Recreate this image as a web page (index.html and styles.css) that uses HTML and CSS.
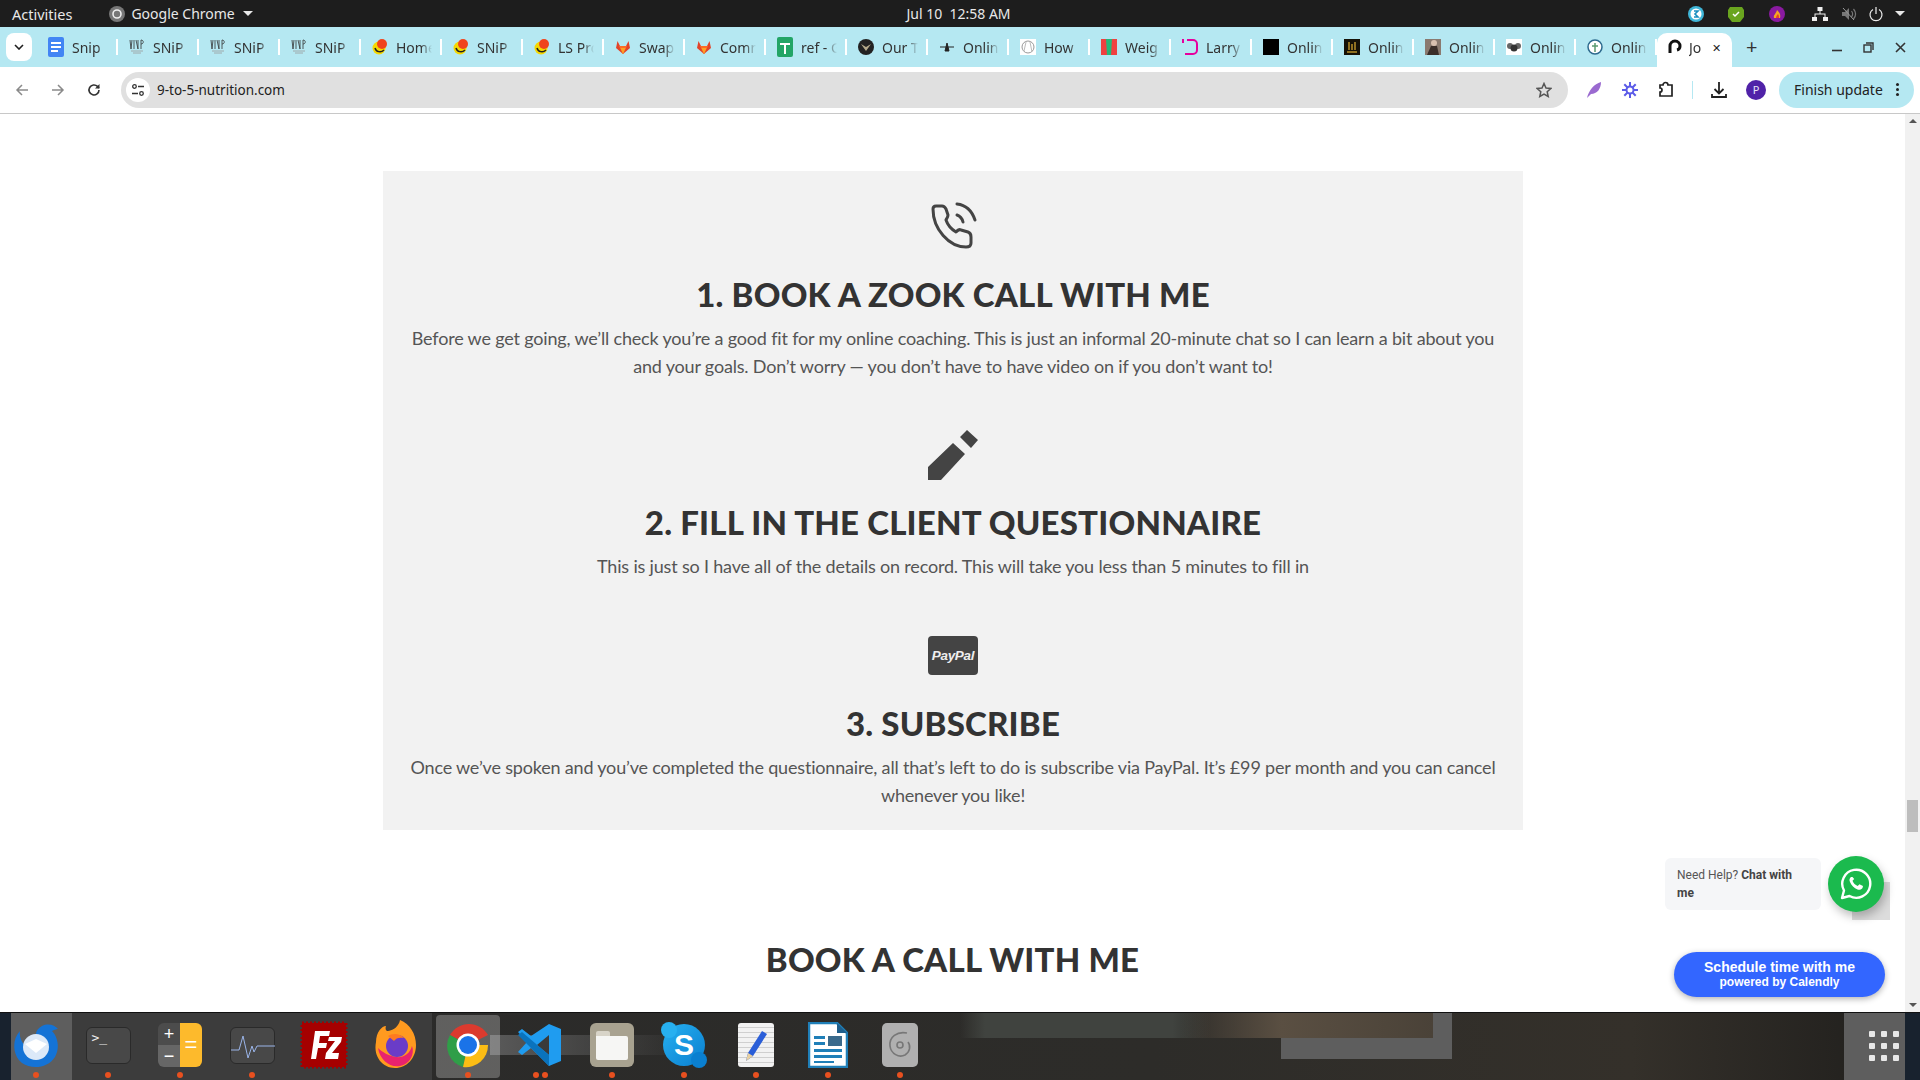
FILE: index.html
```html
<!DOCTYPE html>
<html>
	<head>
		<meta charset="UTF-8">
		<title>9 to 5 Nutrition</title>
		<link rel="stylesheet" href="styles.css">
	</head>
	<body>
		<div class="topbar">
			<div class="top-left">
				<span>Activities</span>
				<span class="app-name">
					<svg width="16" height="16" viewBox="0 0 16 16"><circle cx="8" cy="8" r="8" fill="#777"/><circle cx="8" cy="8" r="4" fill="none" stroke="#eee" stroke-width="1.6"/></svg>
					Google Chrome
					<i class="caret"></i>
				</span>
			</div>
			<div class="clock">Jul 10&nbsp; 12:58 AM</div>
			<div class="tray">
				<svg width="16" height="18" viewBox="0 0 16 18"><circle cx="8" cy="9" r="8" fill="#3fb6d8"/><circle cx="8" cy="9" r="5.5" fill="#fff"/><path d="M6 6h4L7 9l3 3H6" fill="none" stroke="#1a8fc0" stroke-width="1.6"/></svg>
				<svg width="16" height="18" viewBox="0 0 16 18"><path d="M2 2h12l2 3v7l-4 5H4l-4-5V5z" fill="#6aa51f"/><path d="M5 9l2 2 4-4" fill="none" stroke="#fff" stroke-width="1.5"/></svg>
				<svg class="tray-fire" width="16" height="18" viewBox="0 0 16 18"><circle cx="8" cy="9" r="8" fill="#8a1aa0"/><path d="M5 13c-1-3 2-4 3-8 2 2 4 4 3 8z" fill="#f5a623"/><path d="M7 13c0-2 1-3 2-4 1 1 1 3 1 4z" fill="#e8402a"/></svg>
				<svg class="tray-net" width="16" height="16" viewBox="0 0 16 16" fill="#eee"><rect x="5.5" y="1" width="5" height="4"/><rect x="0" y="11" width="5" height="4"/><rect x="11" y="11" width="5" height="4"/><path d="M7.5 5h1v2.500h5V11h-1V8.500h-9V11h-1V7.500h5z"/></svg>
				<svg class="tray-vol" width="16" height="16" viewBox="0 0 16 16"><path d="M1 6h3l4-4v12l-4-4H1z" fill="#777"/><path d="M10.500 5c1.500 2 1.500 4 0 6M12.500 3c2.500 3 2.500 7 0 10" fill="none" stroke="#777" stroke-width="1.200"/><path d="M2 2l11 12" stroke="#999" stroke-width="1"/></svg>
				<svg class="tray-power" width="16" height="16" viewBox="0 0 16 16" fill="none" stroke="#eee" stroke-width="1.200"><path d="M5 3.500a6 6 0 1 0 6 0M8 1v7"/></svg>
				<i class="caret caret-tray"></i>
			</div>
		</div>

		<svg class="defs" width="0" height="0">
			<symbol id="duck" viewBox="0 0 16 16"><circle cx="7" cy="9" r="6.500" fill="#f5d800"/><path d="M3 9c1 4 6 5 9 2" fill="none" stroke="#222" stroke-width="1.500"/><circle cx="10" cy="5" r="5" fill="#f0441c"/></symbol>
			<symbol id="fox" viewBox="0 0 16 16"><path d="M8 15L1 9l1.500-7L5 7h6l2.500-5L15 9z" fill="#e24329"/><path d="M8 15L4 7h8z" fill="#fc6d26"/><path d="M8 15L5.500 9h5z" fill="#fca326"/></symbol>
			<symbol id="snip" viewBox="0 0 16 16"><path d="M1 1l1 9M3 1L2 10M5 1v9M7 1l2 9M9 1v9M12 1v9M12 1c3 0 3 4 0 4" fill="none" stroke="#333" stroke-width=".8"/><path d="M2 12h12M4 14h8" stroke="#999" stroke-width=".8"/></symbol>
		</svg>

		<div class="tabstrip">
			<div class="tab-search"><svg width="10" height="6" viewBox="0 0 10 6"><path d="M1 1l4 4 4-4" fill="none" stroke="#1f1f1f" stroke-width="1.600"/></svg></div>
			<div class="tabs">
				<div class="tab"><svg width="16" height="20" viewBox="0 0 16 20"><rect width="16" height="20" rx="2" fill="#4285f4"/><path d="M3 6h10M3 10h10M3 14h7" stroke="#fff" stroke-width="1.800"/></svg><span>Snip</span></div>
				<div class="tab"><svg width="16" height="16"><use href="#snip"/></svg><span>SNiP</span></div>
				<div class="tab"><svg width="16" height="16"><use href="#snip"/></svg><span>SNiP</span></div>
				<div class="tab"><svg width="16" height="16"><use href="#snip"/></svg><span>SNiP</span></div>
				<div class="tab"><svg width="16" height="16"><use href="#duck"/></svg><span>Home</span></div>
				<div class="tab"><svg width="16" height="16"><use href="#duck"/></svg><span>SNiP</span></div>
				<div class="tab"><svg width="16" height="16"><use href="#duck"/></svg><span>LS Pro</span></div>
				<div class="tab"><svg width="16" height="16"><use href="#fox"/></svg><span>Swap</span></div>
				<div class="tab"><svg width="16" height="16"><use href="#fox"/></svg><span>Comm</span></div>
				<div class="tab"><svg width="16" height="20" viewBox="0 0 16 20"><rect width="16" height="20" rx="2" fill="#23a566"/><path d="M3 7h10M8 7v10" stroke="#fff" stroke-width="2"/></svg><span>ref - G</span></div>
				<div class="tab"><svg width="16" height="16" viewBox="0 0 16 16"><circle cx="8" cy="8" r="8" fill="#222"/><path d="M3 5l5 7 5-7-5 3z" fill="#b5a98a"/></svg><span>Our T</span></div>
				<div class="tab"><svg width="16" height="16" viewBox="0 0 16 16"><path d="M1 8h14M8 4l2 8H6z" stroke="#222" fill="#222"/></svg><span>Online</span></div>
				<div class="tab"><svg width="16" height="16" viewBox="0 0 16 16"><rect width="16" height="16" fill="#fff"/><circle cx="8" cy="8" r="6" fill="none" stroke="#999"/><path d="M6 3l-2 9M10 3l2 10" stroke="#bbb"/></svg><span>How</span></div>
				<div class="tab"><svg width="16" height="16" viewBox="0 0 16 16"><rect width="16" height="16" fill="#f04040"/><path d="M5 0h6l-1 16H6z" fill="#25b87a"/></svg><span>Weig</span></div>
				<div class="tab"><svg width="16" height="16" viewBox="0 0 16 16"><path d="M5 1h6a4 4 0 0 1 4 4v6a4 4 0 0 1-4 4H3" fill="none" stroke="#e6009e" stroke-width="2"/><path d="M1 0v4" stroke="#e6009e" stroke-width="2"/></svg><span>Larry</span></div>
				<div class="tab"><svg width="16" height="16"><rect width="16" height="16" fill="#000"/></svg><span>Online</span></div>
				<div class="tab"><svg width="16" height="16" viewBox="0 0 16 16"><rect width="16" height="16" fill="#161208"/><path d="M3 13h10M5 3v8M8 5v6M11 3v8" stroke="#b8902a" stroke-width="1.500"/></svg><span>Online</span></div>
				<div class="tab"><svg width="16" height="16" viewBox="0 0 16 16"><rect width="16" height="16" fill="#8a7a70"/><circle cx="9" cy="4" r="3" fill="#d8c0b0"/><path d="M2 16l4-9h6l2 9z" fill="#3a2e2a"/></svg><span>Online</span></div>
				<div class="tab"><svg width="16" height="16" viewBox="0 0 16 16"><rect width="16" height="16" fill="#fff"/><circle cx="4" cy="7" r="3" fill="#666"/><circle cx="12" cy="7" r="3" fill="#666"/><circle cx="8" cy="9" r="3.500" fill="#333"/></svg><span>Online</span></div>
				<div class="tab"><svg width="16" height="16" viewBox="0 0 16 16"><circle cx="8" cy="8" r="7" fill="#fff" stroke="#2d6a8e" stroke-width="1.500"/><path d="M8 4v9M5 7h6" stroke="#5a9a70" stroke-width="1.500"/></svg><span>Online</span></div>
				<div class="tab tab-active"><svg width="16" height="16" viewBox="0 0 16 16"><path d="M3 14V7a5 5 0 0 1 10 0c0 2-1 3.500-3 4" fill="none" stroke="#111" stroke-width="3"/></svg><span>Jo</span><b class="tab-x">✕</b></div>
			</div>
			<div class="tab-new">+</div>
			<div class="win-btns">
				<svg width="10" height="10" viewBox="0 0 10 10"><path d="M0 8.500h10" stroke="#333" stroke-width="1.600"/></svg>
				<svg width="11" height="11" viewBox="0 0 11 11" fill="none" stroke="#333" stroke-width="1.400"><rect x="1" y="3" width="7" height="7"/><path d="M3 1h7v7"/></svg>
				<svg width="11" height="11" viewBox="0 0 11 11"><path d="M1 1l9 9M10 1l-9 9" stroke="#333" stroke-width="1.600"/></svg>
			</div>
		</div>

		<div class="toolbar">
			<div class="nav-btns">
				<svg width="14" height="14" viewBox="0 0 14 14" fill="none" stroke="#8a8a8a" stroke-width="1.500"><path d="M13 7H2M7 2L2 7l5 5"/></svg>
				<svg width="14" height="14" viewBox="0 0 14 14" fill="none" stroke="#8a8a8a" stroke-width="1.500"><path d="M1 7h11M7 2l5 5-5 5"/></svg>
				<svg width="14" height="14" viewBox="0 0 14 14" fill="none" stroke="#333" stroke-width="1.600"><path d="M12 7a5 5 0 1 1-1.500-3.600L12 5"/><path d="M12.500 1v4.500H8" fill="#333" stroke="none"/></svg>
			</div>
			<div class="omnibox">
				<span class="site-info"><svg width="14" height="14" viewBox="0 0 14 14" fill="none" stroke="#333" stroke-width="1.300"><circle cx="3.500" cy="3.500" r="1.800"/><path d="M7 3.500h6M1 10.500h6"/><circle cx="10.500" cy="10.500" r="1.800"/></svg></span>
				<span class="url">9-to-5-nutrition.com</span>
				<svg class="star" width="16" height="16" viewBox="0 0 16 16"><path d="M8 1.500l2 4.500 4.800.500-3.600 3.200 1 4.800L8 12l-4.200 2.500 1-4.800L1.200 6.500 6 6z" fill="none" stroke="#555" stroke-width="1.500"/></svg>
			</div>
			<div class="tool-icons">
				<svg width="18" height="18" viewBox="0 0 18 18"><path d="M2 17C4 9 9 3 16 1c0 7-4 12-10 12z" fill="#9a6ad0"/></svg>
				<svg width="18" height="18" viewBox="0 0 18 18" fill="none" stroke="#5c5ce8" stroke-width="2"><path d="M9 1v16M1 9h16M3.300 3.300l11.400 11.400M14.700 3.300L3.300 14.700"/><circle cx="9" cy="9" r="3.500" fill="#fff"/></svg>
				<svg width="18" height="18" viewBox="0 0 18 18" fill="none" stroke="#222" stroke-width="1.700"><path d="M3 4h3a2 2 0 0 1 5 0h4v11H3v-4a2 2 0 0 0 0-4z"/></svg>
				<i class="tool-sep"></i>
				<svg width="18" height="18" viewBox="0 0 18 18" fill="none" stroke="#222" stroke-width="1.800"><path d="M9 1v11M4.500 8L9 12.500 13.500 8M2 13v3h14v-3"/></svg>
				<span class="avatar">P</span>
			</div>
			<div class="finish">Finish update <i class="kebab"></i></div>
		</div>

		<div class="viewport">
			<div class="page">
				<div class="panel">
					<div class="step">
						<svg class="step-icon" width="50" height="50" viewBox="-1 1 50 50" fill="none" stroke="#444" stroke-width="3" stroke-linecap="round" stroke-linejoin="round"><path d="M4 8c0-2 1-3 3-3h6c2 0 3 1 4 3l2 6c0 2-1 3-2 5 2 6 5 9 10 12 2-2 3-3 5-2l7 2c3 1 3 3 3 5v6c0 3-2 4-5 4C20 46 4 28 4 8z"/><path d="M28 14c3 1 5 3 6 7M28 3c9 1 15 7 18 16"/></svg>
						<h2>1. BOOK A ZOOK CALL WITH ME</h2>
						<p>Before we get going, we’ll check you’re a good fit for my online coaching. This is just an informal 20-minute chat so I can learn a bit about you and your goals. Don’t worry — you don’t have to have video on if you don’t want to!</p>
					</div>
					<div class="step">
						<svg class="step-icon" width="50" height="50" viewBox="0 0 50 50" fill="#444"><path d="M0 37L25 13l12 11-24 26H0zM32 7l7-7 11 10-7 8z"/></svg>
						<h2>2. FILL IN THE CLIENT QUESTIONNAIRE</h2>
						<p>This is just so I have all of the details on record. This will take you less than 5 minutes to fill in</p>
					</div>
					<div class="step step-pay">
						<div class="paypal">PayPal</div>
						<h2>3. SUBSCRIBE</h2>
						<p>Once we’ve spoken and you’ve completed the questionnaire, all that’s left to do is subscribe via PayPal. It’s £99 per month and you can cancel whenever you like!</p>
					</div>
				</div>
				<h2 class="book-title">BOOK A CALL WITH ME</h2>
			</div>
			<div class="scrollbar">
				<i class="sb-up"></i>
				<i class="sb-thumb"></i>
				<i class="sb-down"></i>
			</div>
			<div class="wa-shadow"></div>
			<div class="wa-bubble">Need Help? <b>Chat with me</b></div>
			<div class="wa-btn">
				<svg width="32" height="32" viewBox="0 0 32 32"><path d="M2 30l2-7.500A14 14 0 1 1 9.500 28z" fill="none" stroke="#fff" stroke-width="2.400" stroke-linejoin="round"/><path d="M11 9c-1.500 1-2 3-1 5 1.500 3.500 4 6 7.500 7.500 2 .8 4 0 5-1.500l.5-2-3.500-1.800-1.800 1.800c-2.500-1-4.200-2.800-5.200-5.200l1.700-1.800L12.500 9z" fill="#fff"/></svg>
			</div>
			<div class="calendly">Schedule time with me<small>powered by Calendly</small></div>
		</div>

		<div class="dock">
			<div class="dock-item"><svg width="48" height="48" viewBox="0 0 48 48"><path d="M8 10C0 18 0 34 10 42c10 7 26 5 33-6 5-9 3-20-3-26 2-1 4-2 6-2-3-4-10-6-16-3-4 2-6 5-6 8-6 1-11 7-10 13-5-5-7-11-6-16z" fill="#1473d6"/><circle cx="24" cy="26" r="13" fill="#dce9f8"/><path d="M13 23l11 9 11-9-11-5z" fill="#fff"/></svg><i class="dots"></i></div>
			<div class="dock-item"><div class="ico-term"><span>&gt;_</span></div><i class="dots"></i></div>
			<div class="dock-item"><div class="ico-calc"><div class="calc-ops"><span>+</span><span>−</span></div><div class="calc-eq">=</div></div><i class="dots"></i></div>
			<div class="dock-item"><div class="ico-term ico-mon"><svg width="44" height="38" viewBox="0 0 44 38"><path d="M0 22h8l4-14 5 22 4-12 2 6 3-6h18" fill="none" stroke="#9ab4e8" stroke-width="1"/></svg></div><i class="dots"></i></div>
			<div class="dock-item"><svg width="48" height="48" viewBox="0 0 48 48"><rect x="2" y="2" width="44" height="44" fill="#a50000" stroke="#a50000" stroke-width="3" stroke-dasharray="2 2"/><path d="M11 38l4-28h15l-1 5H20l-1 7h8l-1 5h-8l-2 11zM26 32l9-12h-7l1-4h13l-1 5-9 11h7l-1 6H25z" fill="#fff"/></svg><i class="dots dots-none"></i></div>
			<div class="dock-item"><svg width="48" height="50" viewBox="0 0 48 50"><path d="M4 22C4 12 10 6 14 6c-1 3 0 5 2 5 6-1 11-5 12-11 10 4 16 14 16 25 0 13-9 23-21 23S1 37 4 22z" fill="#ff9a1f"/><path d="M6 28c2 12 12 20 22 18s15-12 12-20c-2 8-9 12-16 11S10 32 6 28z" fill="#e8236e"/><circle cx="25" cy="26" r="11" fill="#6a3cc8"/><path d="M16 16c4-3 12-3 16 2-5-1-8 0-10 3z" fill="#ff7a1f"/></svg><i class="dots dots-none"></i></div>
			<div class="dock-item dock-active"><svg width="48" height="48" viewBox="0 0 48 48"><path d="M24 24L6 14A22 22 0 0 1 44 14z" fill="#db3a2e"/><path d="M24 24l-5 22A22 22 0 0 1 6 14z" fill="#2f9e48"/><path d="M24 24h20a22 22 0 0 1-25 22z" fill="#fcbd14"/><circle cx="24" cy="24" r="11.500" fill="#fff"/><circle cx="24" cy="24" r="9" fill="#1a73e8"/></svg><i class="dots"></i></div>
			<div class="dock-item"><svg width="44" height="44" viewBox="0 0 44 44"><path d="M31 1l12 5v32l-12 5-18-18-9 7-4-3 9-10-9-10 4-3 9 7z" fill="#1f9cf0"/><path d="M31 12L19 22l12 10z" fill="#3a3a3a"/><path d="M0 12l4-3 27 23v11z" fill="#0a73bd"/></svg><i class="dots dots-two"></i></div>
			<div class="dock-item"><div class="ico-files"><div class="folder"></div></div><i class="dots"></i></div>
			<div class="dock-item"><div class="ico-skype">S</div><i class="dots"></i></div>
			<div class="dock-item"><div class="ico-writer"><svg width="26" height="34" viewBox="0 0 26 34"><path d="M3 33l2-8L19 3l5 3L10 28z" fill="#2a5ed8"/><path d="M3 33l2-8 5 3z" fill="#e8d0a0"/></svg></div><i class="dots"></i></div>
			<div class="dock-item"><svg width="40" height="46" viewBox="0 0 40 46"><path d="M1 1h28l10 10v34H1z" fill="#fff" stroke="#1f7fb8" stroke-width="2.500"/><path d="M29 1v10h10z" fill="#1f5f8c"/><path d="M6 14h11v3H6zM6 20h11v3H6zM6 27h28v3H6zM6 33h28v3H6zM6 39h20v2H6z" fill="#1f7fb8"/><rect x="20" y="14" width="14" height="10" fill="#3a6a8c"/></svg><i class="dots"></i></div>
			<div class="dock-item"><div class="ico-disc"><svg width="26" height="30" viewBox="0 0 26 30" fill="none" stroke="#777" stroke-width="1.600"><circle cx="13" cy="15" r="3"/><path d="M20 3C10 1 2 7 3 16c1 8 9 12 15 9 5-3 6-9 3-13"/></svg></div><i class="dots"></i></div>
			<div class="dock-grid">
				<i></i><i></i><i></i><i></i><i></i><i></i><i></i><i></i><i></i>
			</div>
		</div>
	</body>
</html>
```

FILE: styles.css
```css
* {
	margin: 0;
	padding: 0;
	box-sizing: border-box;
}
html, body {
	height: 100%;
	overflow: hidden;
}
body {
	display: flex;
	flex-direction: column;
	font-family: "Noto Sans", "Open Sans", sans-serif;
	background: #fff;
}
.defs { position: absolute; }

/* ubuntu top bar */
.topbar {
	height: 27px;
	flex: none;
	background: #1d1d1d;
	color: #e8e8e8;
	font-size: 14px;
	display: grid;
	grid-template-columns: 1fr auto 1fr;
	align-items: center;
	padding: 0 15px 0 12px;
}
.top-left { display: flex; align-items: center; gap: 37px; font-size: 14.500px; }
.app-name { display: flex; align-items: center; gap: 6px; font-size: 14px; }
.caret {
	display: inline-block;
	margin-left: 2px;
	border-left: 5px solid transparent;
	border-right: 5px solid transparent;
	border-top: 5px solid #e8e8e8;
}
.clock { font-size: 14px; }
.tray { display: flex; align-items: center; justify-content: flex-end; gap: 24px; }
.tray-fire { margin-left: 1px; }
.tray-net { margin-left: 3px; }
.tray-vol { margin-left: -11px; }
.tray-power { margin-left: -13px; }
.caret-tray { margin-left: -13px; }

/* tabs */
.tabstrip {
	height: 40px;
	flex: none;
	background: #b5e8f2;
	display: flex;
	align-items: stretch;
	padding-left: 6px;
	position: relative;
}
.tab-search {
	width: 26px;
	height: 28px;
	margin-top: 6px;
	background: #fff;
	border-radius: 8px;
	display: flex;
	align-items: center;
	justify-content: center;
	flex: none;
}
.tabs { display: flex; margin-left: 5px; }
.tab {
	width: 81px;
	height: 40px;
	padding: 0 10px 0 11px;
	display: flex;
	align-items: center;
	gap: 8px;
	position: relative;
	font-size: 14px;
	color: #333;
	flex: none;
	background: linear-gradient(#fff, #fff) right center no-repeat;
	background-size: 2px 16px;
	white-space: nowrap;
}
.tab svg { flex: none; }
.tab span {
	overflow: hidden;
	flex: 1;
	-webkit-mask-image: linear-gradient(to right, #000 70%, transparent);
	mask-image: linear-gradient(to right, #000 70%, transparent);
}
.tab-active {
	width: 75px;
	height: 34px;
	margin-top: 6px;
	padding: 0 11px 6px 10px;
	gap: 6px;
	background: #fff;
	border-radius: 10px 10px 0 0;
}
.tab-x { font-size: 11px; font-weight: normal; color: #222; }
.tab-new { margin-left: 14px; font-size: 20px; color: #333; line-height: 39px; }
.win-btns {
	margin-left: auto;
	display: flex;
	align-items: center;
	gap: 21px;
	padding: 0 14px 0 0;
}

/* toolbar */
.toolbar {
	height: 47px;
	flex: none;
	background: #fff;
	border-bottom: 1px solid #c8c8c8;
	border-radius: 10px 10px 0 0;
	display: flex;
	align-items: center;
	padding: 0 3px 1px 15px;
}
.nav-btns { display: flex; gap: 22px; width: 106px; flex: none; }
.omnibox {
	width: 1447px;
	height: 36px;
	flex: none;
	background: #e0e0e0;
	border-radius: 18px;
	display: flex;
	align-items: center;
	padding: 0 16px 0 5px;
}
.site-info {
	width: 24px;
	height: 24px;
	border-radius: 50%;
	background: #fff;
	display: flex;
	align-items: center;
	justify-content: center;
	flex: none;
}
.url { margin-left: 7px; font-size: 13.500px; color: #222; }
.star { margin-left: auto; }
.tool-icons { display: flex; align-items: center; gap: 18px; margin-left: 17px; flex: none; }
.tool-sep { width: 1px; height: 18px; background: #b5e8f2; margin: 0 -1px; }
.avatar {
	width: 20px;
	height: 20px;
	border-radius: 50%;
	background: #5022a8;
	color: #e8e0f8;
	font-size: 11px;
	display: flex;
	align-items: center;
	justify-content: center;
}
.finish {
	margin-left: 13px;
	width: 135px;
	height: 36px;
	flex: none;
	background: #b5e8f2;
	border-radius: 18px;
	display: flex;
	align-items: center;
	justify-content: space-between;
	padding: 0 15px 0 15px;
	font-size: 14px;
	color: #222;
}
.kebab {
	width: 3px;
	height: 3px;
	border-radius: 50%;
	background: #222;
	box-shadow: 0 -5px 0 #222, 0 5px 0 #222;
}

/* page */
.viewport {
	height: 898px;
	flex: none;
	position: relative;
	overflow: hidden;
	background: #fff;
}
.page { width: 1905px; color: #333; font-family: Lato, "Open Sans", sans-serif; }
.panel {
	width: 1140px;
	margin: 57px 0 0 383px;
	background: #f2f2f2;
	padding: 31px 20px 21px;
	text-align: center;
}
.step + .step { margin-top: 50px; }
.step-pay.step { margin-top: 56px; }
.step-icon { display: block; margin: 0 auto; }
h2 {
	font-size: 33px;
	line-height: 44px;
	font-weight: 900;
	color: #333;
	letter-spacing: .2px;
}
.step h2 { margin-top: 20px; }
.step p {
	margin-top: 8px;
	font-size: 18px;
	line-height: 28px;
	letter-spacing: -.18px;
	color: #555;
}
.paypal {
	width: 50px;
	height: 39px;
	margin: 0 auto 26px;
	background: #444;
	border-radius: 4px;
	color: #eee;
	font: italic bold 13.500px/39px "Liberation Sans", sans-serif;
	letter-spacing: -.3px;
}
.book-title { margin-top: 107px; text-align: center; }

.scrollbar {
	position: absolute;
	right: 0;
	top: 0;
	bottom: 0;
	width: 15px;
	background: #f1f1f1;
}
.sb-thumb {
	position: absolute;
	left: 2px;
	top: 686px;
	width: 11px;
	height: 32px;
	background: #bdbdbd;
}
.sb-up, .sb-down {
	position: absolute;
	left: 4px;
	border-left: 4px solid transparent;
	border-right: 4px solid transparent;
}
.sb-up { top: 5px; border-bottom: 4px solid #555; }
.sb-down { bottom: 5px; border-top: 4px solid #555; }

.wa-shadow {
	position: absolute;
	left: 1852px;
	top: 768px;
	width: 38px;
	height: 38px;
	background: #dcdcdc;
}
.wa-bubble {
	position: absolute;
	left: 1665px;
	top: 744px;
	width: 156px;
	height: 52px;
	padding: 8px 12px;
	background: #f5f6f8;
	border-radius: 6px;
	font: 12px/18px Roboto, "Liberation Sans", sans-serif;
	color: #555;
}
.wa-bubble b { color: #444; }
.wa-btn {
	position: absolute;
	left: 1828px;
	top: 742px;
	width: 56px;
	height: 56px;
	border-radius: 50%;
	background: #1bba4e;
	box-shadow: 2px 5px 10px rgba(0,0,0,.25);
	display: flex;
	align-items: center;
	justify-content: center;
}
.calendly {
	position: absolute;
	left: 1674px;
	top: 838px;
	width: 211px;
	height: 45px;
	border-radius: 23px;
	background: #3366ff;
	box-shadow: 0 2px 6px rgba(0,0,0,.3);
	color: #fff;
	text-align: center;
	font: bold 14px/16px "Liberation Sans", Arial, sans-serif;
	padding-top: 7px;
}
.calendly small { display: block; font-size: 12px; line-height: 15px; }

/* dock */
.dock {
	height: 68px;
	flex: 1;
	display: flex;
	align-items: flex-start;
	position: relative;
	border-top: 1px solid #111;
	background:
		linear-gradient(#5e5e5e, #5e5e5e) 1433px 0 / 19px 46px no-repeat,
		linear-gradient(#5e5e5e, #5e5e5e) 1281px 25px / 171px 21px no-repeat,
		linear-gradient(to right, rgba(74,66,56,0), #5a4f42 40%, #4a4238) 1180px 0 / 253px 25px no-repeat,
		linear-gradient(to right, rgba(64,67,63,0), #40433f 10%, #40433f 85%, rgba(64,67,63,0)) 960px 0 / 250px 25px no-repeat,
		linear-gradient(to right, #5a5a5a, rgba(90,90,90,0)) 490px 22px / 200px 20px no-repeat,
		linear-gradient(#3c3c3c, #3c3c3c) 72px 0 / 360px 67px no-repeat,
		linear-gradient(#5e5e5e, #5e5e5e) 11px 0 / 61px 67px no-repeat,
		linear-gradient(#18222e, #18222e) 0 0 / 11px 67px no-repeat,
		linear-gradient(#18222e, #18222e) right 0 top 0 / 15px 67px no-repeat,
		linear-gradient(to right, #2a2a2a, #2d2c29 60%, #34302a 85%, #1f1e1c);
}
.dock-item {
	width: 72px;
	height: 67px;
	flex: none;
	display: flex;
	align-items: center;
	justify-content: center;
	padding-bottom: 3px;
	position: relative;
}
.dock-active::before {
	content: "";
	position: absolute;
	left: 4px;
	top: 2px;
	width: 64px;
	height: 63px;
	border-radius: 4px;
	background: rgba(255,255,255,.25);
}
.dock-item svg, .dock-item > div { position: relative; }
.dots {
	position: absolute;
	bottom: 2px;
	left: 50%;
	margin-left: -3px;
	width: 6px;
	height: 6px;
	border-radius: 50%;
	background: #e8501f;
}
.dots-none { display: none; }
.dots-two { margin-left: -7px; box-shadow: 9px 0 0 #e8501f; }
.ico-term {
	width: 45px;
	height: 37px;
	background: #484848;
	border-radius: 6px;
	border: 1px solid #2a2a2a;
	color: #eee;
	font: 13px/20px "DejaVu Sans Mono", monospace;
	padding-left: 5px;
}
.ico-mon { padding: 0; font-size: 0; }
.ico-calc {
	width: 44px;
	height: 44px;
	border-radius: 6px;
	overflow: hidden;
	display: flex;
}
.calc-ops {
	width: 22px;
	color: #fff;
	font: 18px/22px "Liberation Sans", sans-serif;
	text-align: center;
	background: linear-gradient(#4c4c4c 50%, #666 50%);
}
.calc-ops span { display: block; }
.calc-eq {
	width: 22px;
	background: #fdba2c;
	color: #fff;
	font: 22px/44px "Liberation Sans", sans-serif;
	text-align: center;
}
.ico-files {
	width: 44px;
	height: 44px;
	border-radius: 6px;
	background: #a8a290;
	display: flex;
	align-items: center;
	justify-content: center;
}
.folder {
	width: 32px;
	height: 24px;
	margin-top: 6px;
	background: #f6f6f4;
	border-radius: 0 2px 2px 2px;
}
.folder::before {
	content: "";
	display: block;
	width: 14px;
	height: 5px;
	margin-top: -5px;
	background: #d8d4c8;
	border-radius: 2px 2px 0 0;
}
.ico-skype {
	width: 42px;
	height: 42px;
	border-radius: 50%;
	background: linear-gradient(135deg, #27b0f0, #0a7fd0);
	color: #fff;
	font: bold 30px/42px "Liberation Sans", sans-serif;
	text-align: center;
	isolation: isolate;
}
.ico-skype::before, .ico-skype::after {
	content: "";
	position: absolute;
	width: 16px;
	height: 16px;
	border-radius: 50%;
	z-index: -1;
}
.ico-skype::before { left: -2px; top: -2px; background: #27b0f0; }
.ico-skype::after { right: -2px; bottom: -2px; background: #0a7fd0; }
.ico-writer {
	width: 36px;
	height: 44px;
	border-radius: 3px;
	background: repeating-linear-gradient(#f2f2f2 0 4px, #cfcfcf 4px 5px);
	display: flex;
	align-items: center;
	justify-content: center;
}
.ico-disc {
	width: 36px;
	height: 44px;
	background: #b0b0b0;
	border-radius: 5px;
	display: flex;
	align-items: center;
	justify-content: center;
}
.dock-grid {
	position: absolute;
	left: 1869px;
	top: 18px;
	width: 30px;
	display: grid;
	grid-template-columns: repeat(3, 6px);
	gap: 6px;
	z-index: 1;
}
.dock-grid i { height: 6px; background: #e8e8e8; border-radius: 1px; }
.dock::after {
	content: "";
	position: absolute;
	left: 1844px;
	top: 0;
	width: 61px;
	height: 67px;
	background: #5e5e5e;
	z-index: 0;
}
```
